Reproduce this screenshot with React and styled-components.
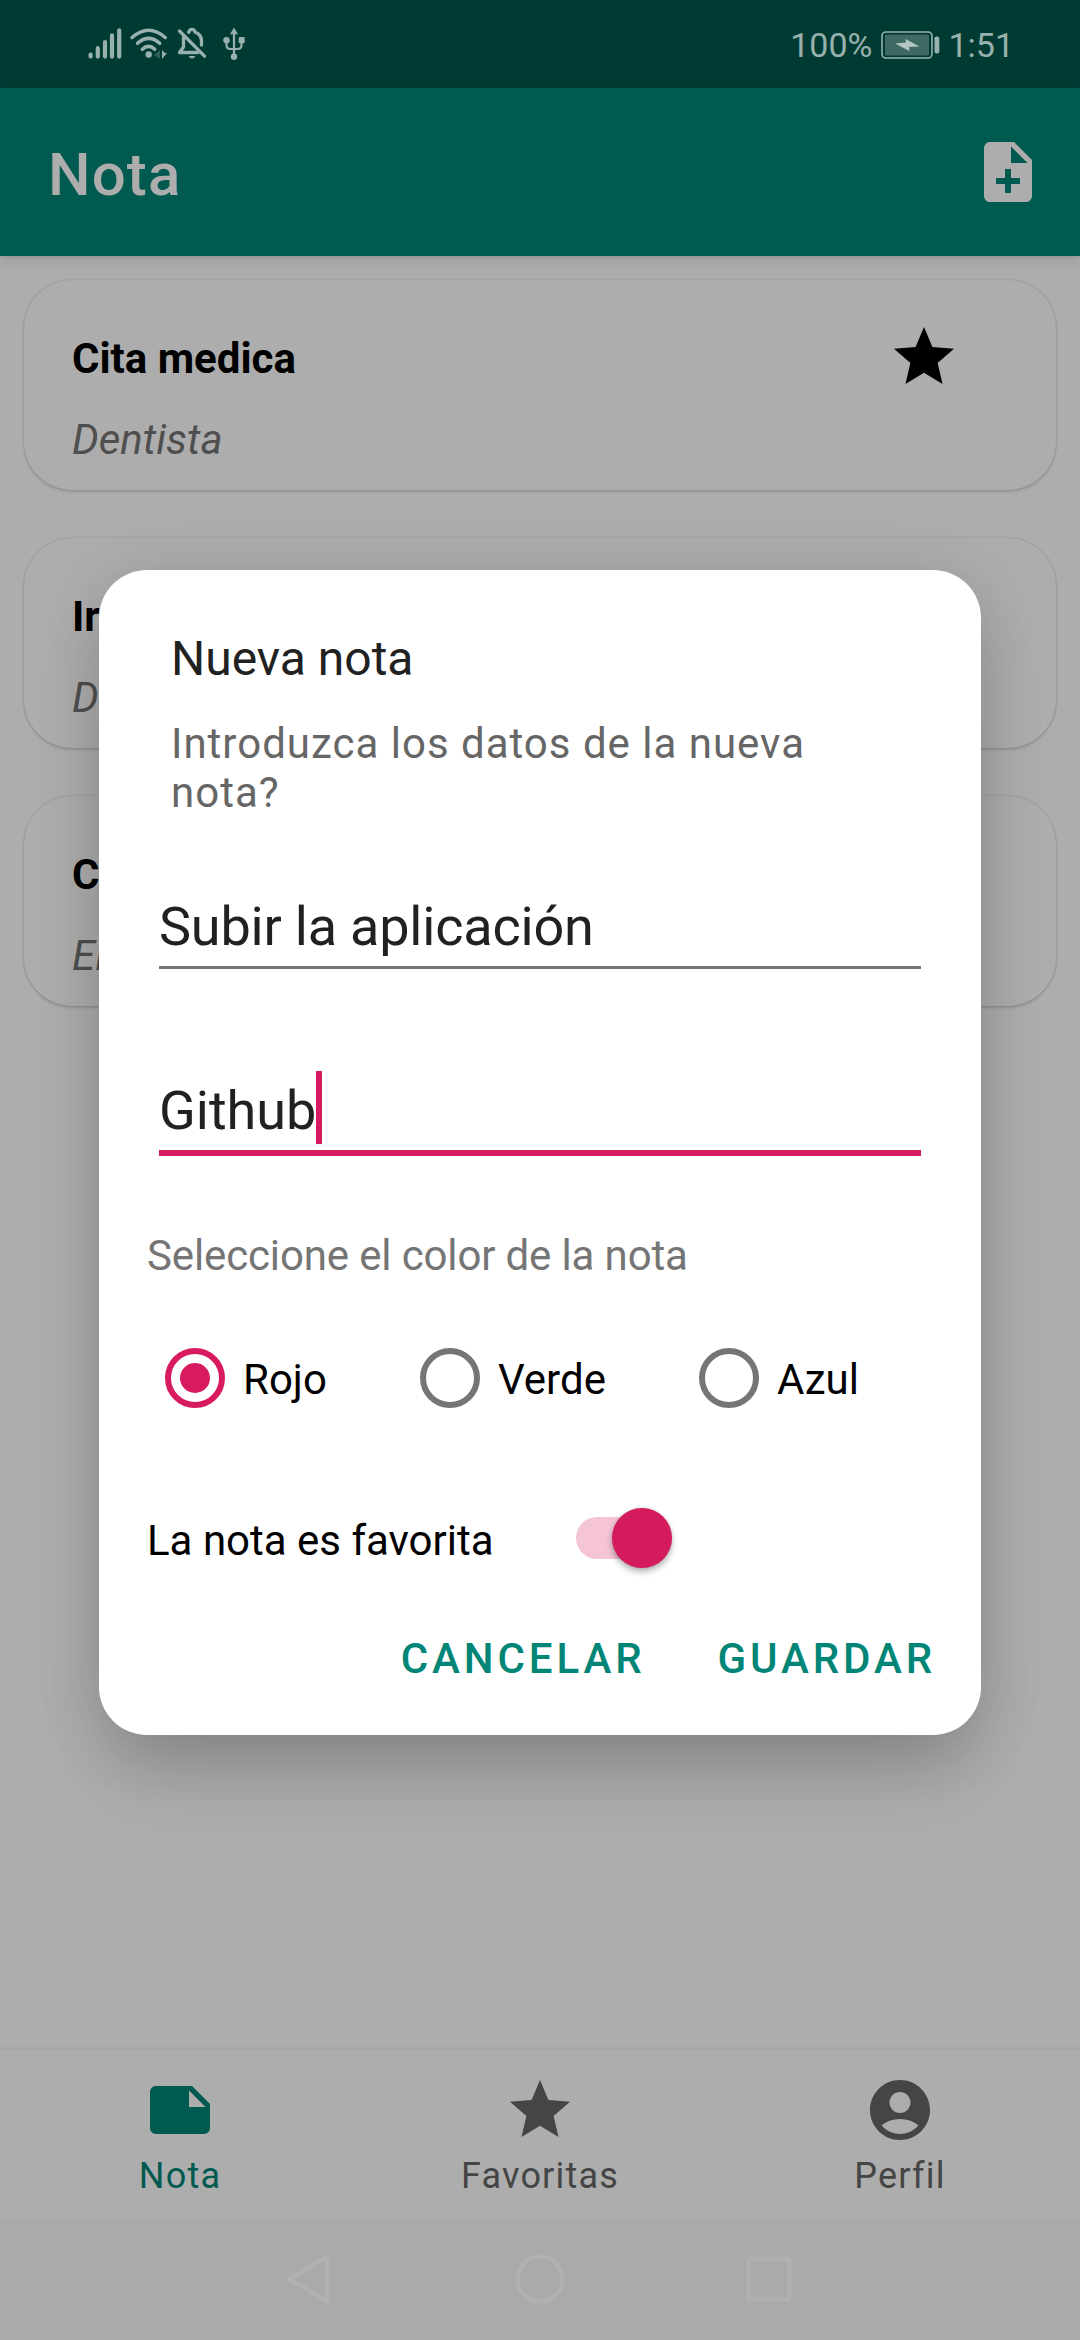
import React from "react";
import styled, { createGlobalStyle, css } from "styled-components";
import { MdNoteAdd, MdNote, MdStar, MdAccountCircle } from "react-icons/md";

const GlobalStyle = createGlobalStyle`
  * { box-sizing: border-box; }
  body {
    margin: 0;
    background: #adadad;
    font-family: Roboto, "Noto Sans", sans-serif;
  }
`;

const Screen = styled.div`
  position: relative;
  display: flex;
  flex-direction: column;
  width: 1080px;
  height: 2340px;
  overflow: hidden;
  background: #adadad;
`;

const StatusBar = styled.header`
  display: flex;
  align-items: center;
  justify-content: space-between;
  flex: none;
  height: 88px;
  padding: 0 66px 0 88px;
  background: #003b33;
  color: #98b1ad;
`;

const StatusGroup = styled.div`
  display: flex;
  align-items: center;
  height: 88px;
`;

const StatusText = styled.span`
  font-size: 34px;
  line-height: 40px;
  padding-top: 2px;
`;

const BatteryIcon = styled.svg`
  display: block;
  margin: 1px 7px 0 9px;
`;

const AppBar = styled.div`
  display: flex;
  align-items: center;
  justify-content: space-between;
  flex: none;
  z-index: 1;
  height: 168px;
  padding: 0 36px 0 48px;
  background: #005a50;
  color: #adadad;
  box-shadow: 0 4px 12px rgba(0, 0, 0, 0.11), 0 1px 3px rgba(0, 0, 0, 0.07);
`;

const AppTitle = styled.h1`
  margin: 0;
  padding-top: 6px;
  font-size: 60px;
  line-height: 70px;
  font-weight: 500;
  letter-spacing: 1.1px;
`;

const NoteList = styled.main`
  display: flex;
  flex-direction: column;
  flex: 1;
  gap: 48px;
  padding: 24px;
`;

const NoteCard = styled.article`
  display: flex;
  justify-content: space-between;
  height: 210px;
  padding: 41px 96px 0 48px;
  border-radius: 48px;
  background: #adadad;
  box-shadow: 0 0 2px rgba(0, 0, 0, 0.22), 0 2px 3px rgba(0, 0, 0, 0.12);
`;

const NoteTitle = styled.h2`
  margin: 13px 0 32px;
  font-size: 42px;
  line-height: 49px;
  font-weight: 700;
  color: #000;
`;

const NoteText = styled.p`
  margin: 0;
  font-size: 42px;
  line-height: 49px;
  font-style: italic;
  color: #4f4f4f;
`;

const BottomNav = styled.nav`
  display: grid;
  grid-template-columns: repeat(3, 1fr);
  flex: none;
  height: 168px;
  background: #adadad;
  box-shadow: 0 0 6px rgba(0, 0, 0, 0.1);
`;

const NavItem = styled.div`
  display: flex;
  flex-direction: column;
  align-items: center;
  padding-top: 24px;
  font-size: 36px;
  line-height: 42px;
  letter-spacing: 1.2px;
  color: ${({ $active }) => ($active ? "#005a50" : "#454545")};
`;

const NavLabel = styled.span`
  margin-top: 9px;
`;

const SystemNav = styled.div`
  display: flex;
  justify-content: center;
  align-items: center;
  gap: 179px;
  flex: none;
  z-index: 1;
  height: 122px;
  background: #aaaaaa;
  color: #b1b1b1;
`;

const SystemIcon = styled.svg`
  display: block;
`;

const Scrim = styled.div`
  position: absolute;
  inset: 0;
  z-index: 2;
  padding: 570px 99px 0;
`;

const Dialog = styled.section`
  display: flex;
  flex-direction: column;
  height: 1165px;
  border-radius: 48px;
  background: #fff;
  box-shadow: 0 48px 72px -12px rgba(0, 0, 0, 0.16), 0 6px 66px rgba(0, 0, 0, 0.13);
`;

const DialogTitle = styled.h2`
  margin: 61px 72px 0;
  font-size: 48px;
  line-height: 56px;
  font-weight: 400;
  color: #212121;
`;

const DialogMessage = styled.p`
  margin: 32px 72px 0;
  font-size: 42px;
  line-height: 49px;
  letter-spacing: 1px;
  color: #666;
`;

const Field = styled.div`
  display: flex;
  align-items: flex-start;
  height: ${({ $focused }) => ($focused ? 85 : 82)}px;
  margin: ${({ $focused }) => ($focused ? 102 : 70)}px 60px 0;
  border-bottom: ${({ $focused }) => ($focused ? "6px solid #d81b60" : "3px solid #757575")};
  font-size: 54px;
  line-height: 73px;
  letter-spacing: ${({ $focused }) => ($focused ? 0 : -0.2)}px;
  color: #212121;
`;

const FieldText = styled.span`
  padding-top: 3px;
`;

const Caret = styled.span`
  width: 6px;
  height: 73px;
  background: #d81b60;
`;

const Hint = styled.p`
  margin: 75px 48px 0;
  font-size: 42px;
  line-height: 49px;
  letter-spacing: -0.14px;
  color: #757575;
`;

const RadioGroup = styled.div`
  display: flex;
  height: 60px;
  margin: 68px 66px 0;
`;

const RadioOption = styled.label`
  display: flex;
  align-items: center;
  gap: 18px;
  width: ${({ $width }) => $width}px;
  font-size: 42px;
  line-height: 49px;
  color: #000;
`;

const RadioRing = styled.span`
  display: grid;
  place-items: center;
  flex: none;
  width: 60px;
  height: 60px;
  border: 6px solid #757575;
  border-radius: 50%;
  ${({ $checked }) =>
    $checked &&
    css`
      border-color: #d81b60;
      &::after {
        content: "";
        width: 30px;
        height: 30px;
        border-radius: 50%;
        background: #d81b60;
      }
    `}
`;

const RadioLabel = styled.span`
  padding-top: 3px;
`;

const FavoriteRow = styled.div`
  display: flex;
  align-items: center;
  height: 60px;
  margin: 100px 48px 0;
  font-size: 42px;
  line-height: 49px;
  color: #000;
`;

const FavoriteLabel = styled.span`
  width: 429px;
  padding-top: 5px;
`;

const SwitchTrack = styled.span`
  display: flex;
  align-items: center;
  justify-content: flex-end;
  width: 96px;
  height: 42px;
  border-radius: 21px;
  background: #f5c4d6;
`;

const SwitchThumb = styled.span`
  flex: none;
  width: 60px;
  height: 60px;
  border-radius: 50%;
  background: #d31b5e;
  box-shadow: 0 4px 6px rgba(0, 0, 0, 0.28), 0 0 3px rgba(0, 0, 0, 0.15);
`;

const Actions = styled.div`
  display: flex;
  justify-content: flex-end;
  gap: 72px;
  margin: 66px 45px 0;
`;

const ActionButton = styled.button`
  padding: 0;
  border: 0;
  background: none;
  font-family: inherit;
  font-size: 42px;
  line-height: 49px;
  font-weight: 500;
  letter-spacing: 3.9px;
  color: #008577;
`;

const notes = [
  { title: "Cita medica", text: "Dentista", favorite: true },
  { title: "Ir", text: "D" },
  { title: "C", text: "El" },
];

const StatusIcons = () => (
  <svg width="160" height="36" viewBox="88 27 160 36" fill="none" stroke="currentColor" strokeLinecap="round">
    <path strokeWidth="4.2" d="M90.6 57.6v-2M97.8 57.6v-8.4M105 57.6V43M112 57.6V36.4M119.2 57.6V31.4" />
    <g strokeWidth="3.5">
      <path d="M132 38.5Q148.7 24 165.2 38.5" />
      <path d="M137.5 44.3Q148.7 34.5 159.7 44.3" />
      <path d="M142.3 50.3Q148.7 44.5 154.7 50.3" />
    </g>
    <circle cx="148.7" cy="55.5" r="3.2" fill="currentColor" stroke="none" />
    <path fill="currentColor" stroke="none" d="M162 51v9l5-6h-2z" />
    <path fill="currentColor" stroke="none" opacity=".3" d="M160 51v9l-6-4z" />
    <g strokeWidth="3.3" strokeLinejoin="round">
      <path d="M179.5 32L204.5 57.2" />
      <path d="M183.5 38.5v9.5l-4 5.5h18.5" />
      <path d="M188.7 33.3Q189.5 30.3 192 30.3Q194.500 30.3 195 33Q201.5 35.5 201.5 42v4" />
    </g>
    <path fill="currentColor" stroke="none" d="M188.5 57h7q-3.5 5-7 0z" />
    <path strokeWidth="2.2" strokeLinecap="butt" d="M234 34v24M226.5 42v4q0 4 4 4h7q4 0 4-4v-4" />
    <g fill="currentColor" stroke="none">
      <path d="M234 28.5l4 6.8h-8z" />
      <circle cx="226.5" cy="41.2" r="3.2" />
      <rect x="238.7" y="38" width="6" height="6.2" rx="1" />
      <circle cx="234" cy="57.7" r="3.2" />
    </g>
  </svg>
);

const Battery = () => (
  <BatteryIcon width="60" height="28" viewBox="0 0 60 28">
    <rect x="1" y="1" width="50" height="26" rx="4" fill="none" stroke="currentColor" strokeWidth="1.6" />
    <rect x="4" y="3.5" width="44" height="21" rx="1.5" fill="#3f6963" />
    <path d="M14 12.5l11-1-.5-3.5L38.5 15.5l-10.5.5.5 4z" fill="#b3c6c3" />
    <rect x="53.5" y="5.5" width="4.8" height="17" rx="2" fill="currentColor" />
  </BatteryIcon>
);

export default function App() {
  return (
    <>
      <GlobalStyle />
      <Screen>
        <StatusBar>
          <StatusGroup>
            <StatusIcons />
          </StatusGroup>
          <StatusGroup>
            <StatusText>100%</StatusText>
            <Battery />
            <StatusText>1:51</StatusText>
          </StatusGroup>
        </StatusBar>

        <AppBar>
          <AppTitle>Nota</AppTitle>
          <MdNoteAdd size={72} />
        </AppBar>

        <NoteList>
          {notes.map((note) => (
            <NoteCard key={note.title}>
              <div>
                <NoteTitle>{note.title}</NoteTitle>
                <NoteText>{note.text}</NoteText>
              </div>
              {note.favorite && <MdStar size={72} color="#000" />}
            </NoteCard>
          ))}
        </NoteList>

        <BottomNav>
          <NavItem $active>
            <MdNote size={72} />
            <NavLabel>Nota</NavLabel>
          </NavItem>
          <NavItem>
            <MdStar size={72} />
            <NavLabel>Favoritas</NavLabel>
          </NavItem>
          <NavItem>
            <MdAccountCircle size={72} />
            <NavLabel>Perfil</NavLabel>
          </NavItem>
        </BottomNav>

        <SystemNav>
          <SystemIcon width="50" height="52" viewBox="0 0 50 52" fill="none" stroke="currentColor" strokeWidth="4.5" strokeLinejoin="round">
            <path d="M41.7 3.5v45L3.2 26z" />
          </SystemIcon>
          <SystemIcon width="50" height="50" viewBox="0 0 50 50" fill="none" stroke="currentColor" strokeWidth="4.5">
            <circle cx="25" cy="25" r="22.5" />
          </SystemIcon>
          <SystemIcon width="50" height="50" viewBox="0 0 50 50" fill="none" stroke="currentColor" strokeWidth="4.5">
            <rect x="4.75" y="4.75" width="40.5" height="40.5" rx="1.5" />
          </SystemIcon>
        </SystemNav>

        <Scrim>
          <Dialog>
            <DialogTitle>Nueva nota</DialogTitle>
            <DialogMessage>Introduzca los datos de la nueva nota?</DialogMessage>
            <Field>
              <FieldText>Subir la aplicación</FieldText>
            </Field>
            <Field $focused>
              <FieldText>Github</FieldText>
              <Caret />
            </Field>
            <Hint>Seleccione el color de la nota</Hint>
            <RadioGroup>
              <RadioOption $width={255}>
                <RadioRing $checked />
                <RadioLabel>Rojo</RadioLabel>
              </RadioOption>
              <RadioOption $width={279}>
                <RadioRing />
                <RadioLabel>Verde</RadioLabel>
              </RadioOption>
              <RadioOption $width={180}>
                <RadioRing />
                <RadioLabel>Azul</RadioLabel>
              </RadioOption>
            </RadioGroup>
            <FavoriteRow>
              <FavoriteLabel>La nota es favorita</FavoriteLabel>
              <SwitchTrack>
                <SwitchThumb />
              </SwitchTrack>
            </FavoriteRow>
            <Actions>
              <ActionButton>CANCELAR</ActionButton>
              <ActionButton>GUARDAR</ActionButton>
            </Actions>
          </Dialog>
        </Scrim>
      </Screen>
    </>
  );
}
